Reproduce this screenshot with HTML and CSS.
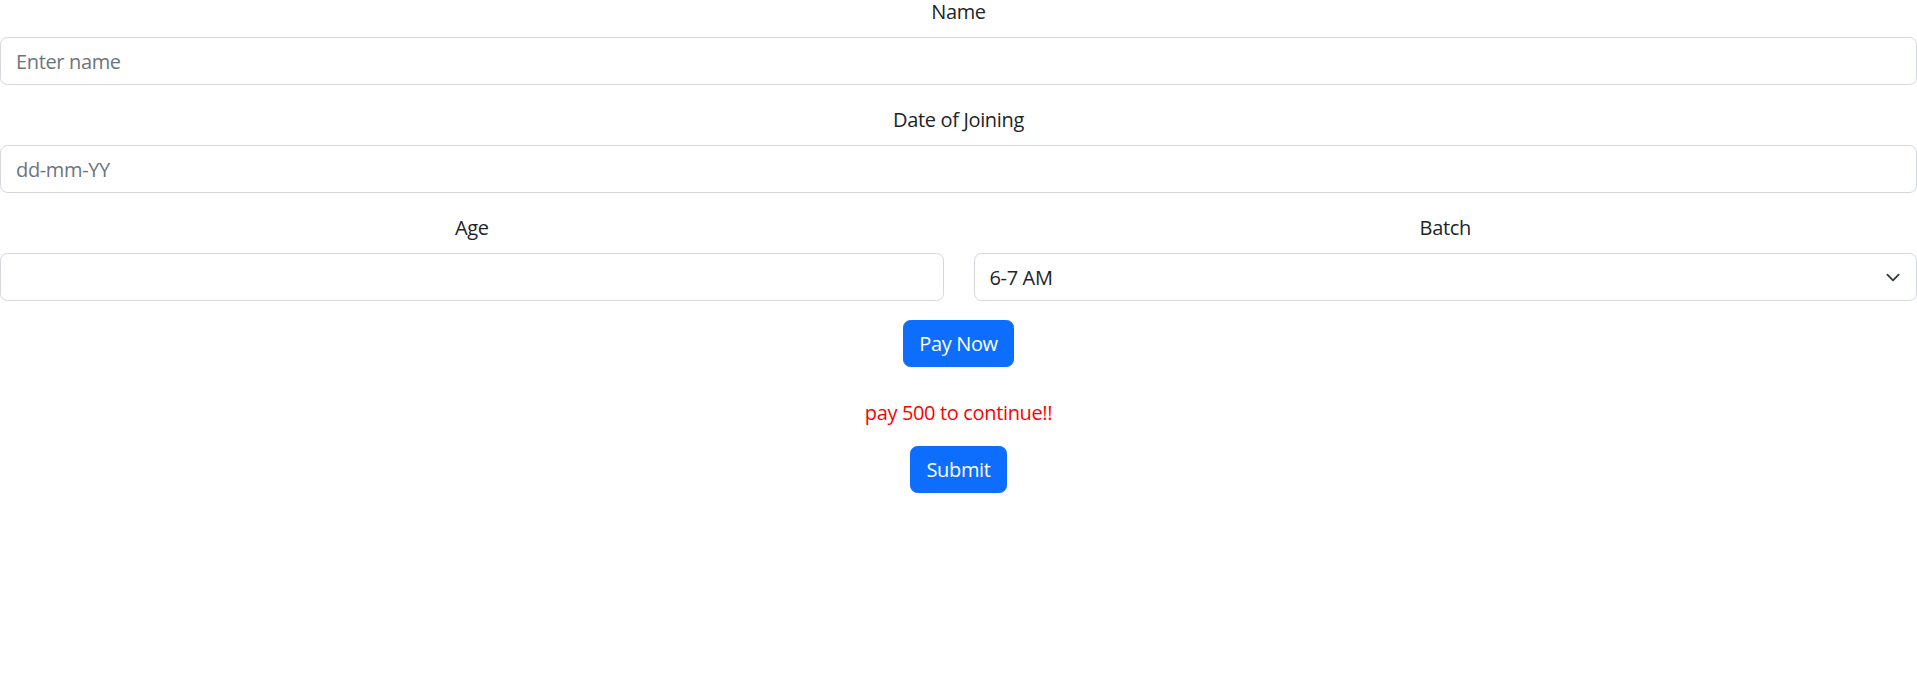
FILE: index.html
```html
<!DOCTYPE html>
<html lang="en">
<head>
<meta charset="utf-8">
<title>Registration</title>
<link rel="stylesheet" href="styles.css">
</head>
<body>
<form class="form">
  <div class="field">
    <label class="label" for="name">Name</label>
    <input class="control" id="name" type="text" placeholder="Enter name">
  </div>
  <div class="field">
    <label class="label" for="doj">Date of Joining</label>
    <input class="control" id="doj" type="text" placeholder="dd-mm-YY">
  </div>
  <div class="pair">
    <div class="field">
      <label class="label" for="age">Age</label>
      <input class="control" id="age" type="text">
    </div>
    <div class="field">
      <label class="label" for="batch">Batch</label>
      <select class="control select" id="batch">
        <option>6-7 AM</option>
        <option>7-8 AM</option>
        <option>8-9 AM</option>
        <option>5-6 PM</option>
      </select>
    </div>
  </div>
  <div class="actions">
    <button class="btn" type="button">Pay Now</button>
  </div>
  <p class="warn">pay 500 to continue!!</p>
  <div class="actions">
    <button class="btn" type="submit">Submit</button>
  </div>
</form>
</body>
</html>
```

FILE: styles.css
```css
* { box-sizing: border-box; }

html, body {
  margin: 0;
  padding: 0;
  background: #fff;
}

body {
  font-family: "Open Sans", "Noto Sans", sans-serif;
  font-size: 20px;
  letter-spacing: -0.35px;
  color: #212529;
}

.form {
  display: flex;
  flex-direction: column;
  width: 100%;
}

.field {
  display: flex;
  flex-direction: column;
  margin-bottom: 23px;
}

.label {
  display: block;
  text-align: center;
  line-height: 24px;
  margin-bottom: 13px;
  font-size: 20px;
}

.control {
  display: block;
  width: 100%;
  height: 48px;
  padding: 0 15px;
  font-family: inherit;
  font-size: 20px;
  letter-spacing: -0.35px;
  color: #212529;
  background: #fff;
  border: 1px solid #d3d6da;
  border-radius: 7.5px;
  outline: none;
  appearance: none;
  -webkit-appearance: none;
}

.control::placeholder {
  color: #6c757d;
  opacity: 1;
}

.select {
  padding-right: 50px;
  background-image: url("data:image/svg+xml,%3csvg xmlns='http://www.w3.org/2000/svg' viewBox='0 0 16 16'%3e%3cpath fill='none' stroke='%23343a40' stroke-linecap='round' stroke-linejoin='round' stroke-width='2' d='m2 5 6 6 6-6'/%3e%3c/svg%3e");
  background-repeat: no-repeat;
  background-position: right 13px center;
  background-size: 20px 15px;
}

.pair {
  display: grid;
  grid-template-columns: 1fr 1fr;
  column-gap: 30px;
}

.pair .field {
  margin-bottom: 19px;
}

.actions {
  display: flex;
  justify-content: center;
}

.btn {
  font-family: inherit;
  font-size: 20px;
  letter-spacing: -0.35px;
  line-height: 30px;
  padding: 7.5px 15px;
  color: #fff;
  background: #0d6efd;
  border: 1px solid #0d6efd;
  border-radius: 7.5px;
  cursor: pointer;
}

.warn {
  margin: 31px 0 18px;
  text-align: center;
  color: #f00;
  line-height: 30px;
}
```
